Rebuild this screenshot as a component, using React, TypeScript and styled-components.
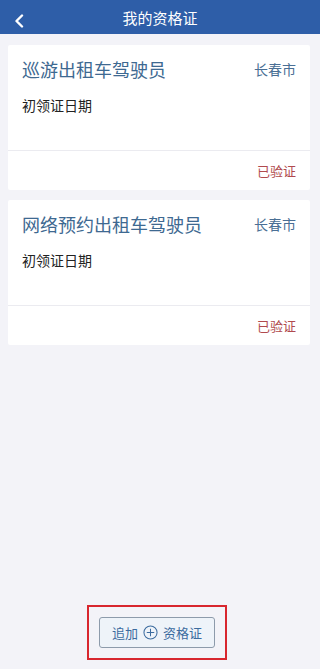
import styled, { createGlobalStyle } from 'styled-components'

const GlobalStyle = createGlobalStyle`
    html, body {
        margin: 0;
        padding: 0;
        background: #f3f3f8;
        font-family: "Noto Sans CJK SC", "Noto Sans", sans-serif;
    }
`

const Page = styled.div`
    width: 320px;
    height: 669px;
    display: flex;
    flex-direction: column;
    background: #f3f3f8;
`

const Header = styled.div`
    height: 34px;
    background: #2e5ea8;
    display: flex;
    align-items: center;
    justify-content: center;
    position: relative;
    color: #ffffff;
    font-size: 15px;
`

const BackButton = styled.div`
    position: absolute;
    left: 13px;
    top: 11px;
    width: 12px;
    height: 14px;
`

const List = styled.div`
    display: flex;
    flex-direction: column;
    gap: 10px;
    padding: 11px 10px 0 8px;
`

const Card = styled.div`
    background: #ffffff;
    border-radius: 2px;
    display: flex;
    flex-direction: column;
`

const CardBody = styled.div`
    height: 105px;
    padding: 0 14px 0 14px;
    border-bottom: 1px solid #ebebf0;
`

const TitleRow = styled.div`
    display: flex;
    justify-content: space-between;
    align-items: center;
    height: 48px;
`

const Title = styled.span`
    font-size: 18px;
    color: #3e6991;
`

const City = styled.span`
    font-size: 14px;
    color: #4a6f95;
`

const DateLabel = styled.div`
    font-size: 14px;
    color: #222222;
    margin-top: 2px;
`

const CardFooter = styled.div`
    height: 39px;
    display: flex;
    align-items: center;
    justify-content: flex-end;
    padding-right: 14px;
`

const Verified = styled.span`
    font-size: 13px;
    color: #b04a4e;
`

const Spacer = styled.div`
    flex: 1;
`

const Bottom = styled.div`
    display: flex;
    justify-content: center;
    padding: 0 6px 9px 0;
`

const Highlight = styled.div`
    width: 136px;
    height: 51px;
    border: 2px solid #d8262e;
    display: flex;
    align-items: center;
    justify-content: center;
`

const AddButton = styled.div`
    width: 114px;
    height: 29px;
    border: 1px solid #8d9bab;
    border-radius: 3px;
    background: #eef3f9;
    display: flex;
    align-items: center;
    justify-content: center;
    gap: 5px;
    color: #3b6b9f;
    font-size: 13px;
`

const certs = [
    { title: '巡游出租车驾驶员', city: '长春市' },
    { title: '网络预约出租车驾驶员', city: '长春市' },
]

export default function App() {
    return (
        <Page>
            <GlobalStyle />
            <Header>
                <BackButton>
                    <svg width="12" height="14" viewBox="0 0 12 14">
                        <path d="M9 1.5 L3.5 7 L9 12.5" fill="none" stroke="#ffffff" strokeWidth="2.4" strokeLinecap="round" strokeLinejoin="round" />
                    </svg>
                </BackButton>
                我的资格证
            </Header>
            <List>
                {certs.map(c => (
                    <Card key={c.title}>
                        <CardBody>
                            <TitleRow>
                                <Title>{c.title}</Title>
                                <City>{c.city}</City>
                            </TitleRow>
                            <DateLabel>初领证日期</DateLabel>
                        </CardBody>
                        <CardFooter>
                            <Verified>已验证</Verified>
                        </CardFooter>
                    </Card>
                ))}
            </List>
            <Spacer />
            <Bottom>
                <Highlight>
                    <AddButton>
                        追加
                        <svg width="15" height="15" viewBox="0 0 16 16">
                            <circle cx="8" cy="8" r="7" fill="none" stroke="#3b6b9f" strokeWidth="1.1" />
                            <path d="M8 4 V12 M4 8 H12" stroke="#3b6b9f" strokeWidth="1.1" />
                        </svg>
                        资格证
                    </AddButton>
                </Highlight>
            </Bottom>
        </Page>
    )
}
